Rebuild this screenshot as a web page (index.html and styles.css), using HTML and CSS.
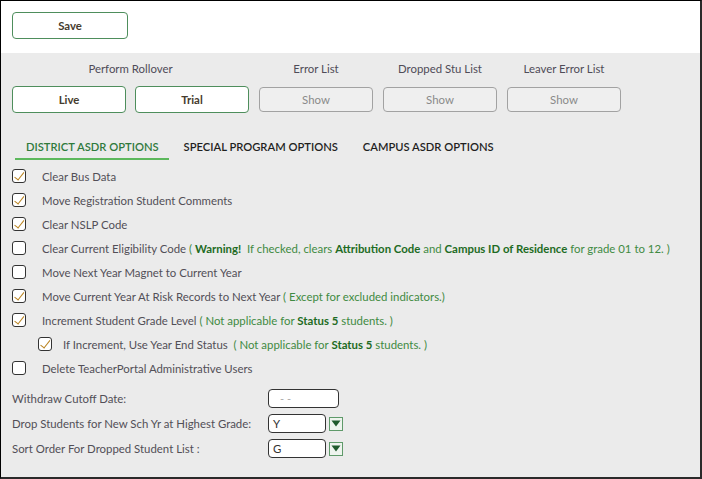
FILE: index.html
```html
<!DOCTYPE html>
<html>
<head>
<meta charset="utf-8">
<link rel="stylesheet" href="styles.css">
</head>
<body>
<div class="frame">
  <div class="top">
    <button class="btn btn-green">Save</button>
  </div>
  <div class="panel">
    <div class="actions">
      <div class="group">
        <div class="group-label">Perform Rollover</div>
        <div class="group-btns">
          <button class="btn btn-green">Live</button>
          <button class="btn btn-green">Trial</button>
        </div>
      </div>
      <div class="group">
        <div class="group-label">Error List</div>
        <button class="btn btn-gray">Show</button>
      </div>
      <div class="group">
        <div class="group-label">Dropped Stu List</div>
        <button class="btn btn-gray">Show</button>
      </div>
      <div class="group">
        <div class="group-label">Leaver Error List</div>
        <button class="btn btn-gray">Show</button>
      </div>
    </div>

    <div class="tabs">
      <div class="tab active">DISTRICT ASDR OPTIONS</div>
      <div class="tab">SPECIAL PROGRAM OPTIONS</div>
      <div class="tab">CAMPUS ASDR OPTIONS</div>
    </div>

    <ul class="options">
      <li class="opt"><span class="cb checked"></span><span class="lbl">Clear Bus Data</span></li>
      <li class="opt"><span class="cb checked"></span><span class="lbl">Move Registration Student Comments</span></li>
      <li class="opt"><span class="cb checked"></span><span class="lbl">Clear NSLP Code</span></li>
      <li class="opt"><span class="cb"></span><span class="lbl">Clear Current Eligibility Code <span class="note">( <b>Warning!</b>&nbsp; If checked, clears <b>Attribution Code</b> and <b>Campus ID of Residence</b> for grade 01 to 12. )</span></span></li>
      <li class="opt"><span class="cb"></span><span class="lbl">Move Next Year Magnet to Current Year</span></li>
      <li class="opt"><span class="cb checked"></span><span class="lbl">Move Current Year At Risk Records to Next Year <span class="note">( Except for excluded indicators.)</span></span></li>
      <li class="opt"><span class="cb checked"></span><span class="lbl">Increment Student Grade Level <span class="note">( Not applicable for <b>Status 5</b> students. )</span></span></li>
      <li class="opt sub"><span class="cb checked"></span><span class="lbl">If Increment, Use Year End Status&nbsp; <span class="note">( Not applicable for <b>Status 5</b> students. )</span></span></li>
      <li class="opt"><span class="cb"></span><span class="lbl">Delete TeacherPortal Administrative Users</span></li>
    </ul>

    <div class="fields">
      <div class="field">
        <span class="field-label">Withdraw Cutoff Date:</span>
        <span class="input date">- -</span>
      </div>
      <div class="field">
        <span class="field-label">Drop Students for New Sch Yr at Highest Grade:</span>
        <span class="input sel">Y</span>
        <span class="drop"><svg width="10" height="7" viewBox="0 0 10 7"><path d="M0.5 0.5 H9.5 L5 6.5 Z" fill="#1f5a2c"/></svg></span>
      </div>
      <div class="field">
        <span class="field-label">Sort Order For Dropped Student List :</span>
        <span class="input sel">G</span>
        <span class="drop"><svg width="10" height="7" viewBox="0 0 10 7"><path d="M0.5 0.5 H9.5 L5 6.5 Z" fill="#1f5a2c"/></svg></span>
      </div>
    </div>
  </div>
</div>
</body>
</html>
```

FILE: styles.css
```css
* { box-sizing: border-box; }
html, body { margin: 0; padding: 0; background: #ffffff; }
body {
  font-family: Lato, "Open Sans", "Liberation Sans", sans-serif;
  font-size: 11.4px;
  color: #524f57;
}
.frame {
  width: 702px;
  height: 479px;
  border-left: 1px solid #000;
  border-top: 1px solid #000;
  border-right: 2px solid #2a2a2a;
  border-bottom: 2px solid #2a2a2a;
  display: flex;
  flex-direction: column;
}
.top {
  background: #fff;
  height: 52px;
  padding: 11px 0 0 11px;
}
.btn {
  font-family: inherit;
  font-size: 11.4px;
  width: 114px;
  height: 27px;
  border-radius: 4px;
  padding: 0;
  margin: 0;
  display: flex;
  align-items: center;
  justify-content: center;
}
.btn-green {
  background: #fff;
  border: 1px solid #4e8e5c;
  color: #463c2e;
  font-weight: 700;
}
.top .btn-green { width: 116px; }
.btn-gray {
  background: #efefef;
  border: 1px solid #a2a2a2;
  color: #8a8a8a;
  height: 25px;
  margin-top: 1px;
  width: 114px;
}
.panel {
  flex: 1;
  background: #ebebeb;
  padding: 8px 0 0 11px;
}
.actions {
  display: flex;
  gap: 10px;
}
.group {
  display: flex;
  flex-direction: column;
  align-items: center;
}
.group-label {
  height: 16px;
  line-height: 16px;
  margin-bottom: 9px;
  color: #4f4c58;
}
.group-btns {
  display: flex;
  gap: 9px;
}
.tabs {
  display: flex;
  gap: 4px;
  margin: 22px 0 0 3px;
}
.tab {
  padding: 4px 10px 3px 11px;
  line-height: 16px;
  font-size: 11.2px;
  font-weight: 600;
  color: #1f1f1f;
  border-bottom: 2px solid transparent;
}
.tab.active {
  color: #2f7a3c;
  border-bottom-color: #5cb85c;
}
.options {
  list-style: none;
  margin: 4px 0 0;
  padding: 0;
}
.opt {
  height: 24px;
  display: flex;
  align-items: center;
}
.cb {
  width: 14px;
  height: 14px;
  border: 1.5px solid #333;
  border-radius: 3px;
  background: #fff;
  margin-right: 16px;
  flex: none;
  position: relative;
}
.cb.checked::after {
  content: "";
  position: absolute;
  left: 3.5px;
  top: 0px;
  width: 3.5px;
  height: 8.5px;
  border-right: 1.8px solid #b9821e;
  border-bottom: 1.8px solid #b9821e;
  transform: rotate(38deg);
}
.opt.sub { padding-left: 26px; }
.opt.sub .cb { margin-right: 11px; }
.lbl { white-space: nowrap; }
.note { color: #3f8a42; }
.note b { color: #1e6b24; font-weight: 700; }
.fields {
  margin-top: 6px;
}
.field {
  height: 25px;
  display: flex;
  align-items: center;
}
.field-label {
  width: 256px;
  color: #524f57;
}
.input {
  height: 19px;
  border: 1.5px solid #333;
  border-radius: 4px;
  background: #fff;
  display: flex;
  align-items: center;
  padding-left: 4px;
  color: #333;
}
.input.date {
  width: 71px;
  padding-left: 11px;
  color: #aaa;
  font-size: 11px;
}
.input.sel { width: 58px; }
.drop {
  width: 14px;
  height: 14px;
  margin-left: 3px;
  border: 1px solid #5f9a6a;
  background: #eef4ee;
  display: flex;
  align-items: center;
  justify-content: center;
}
```
